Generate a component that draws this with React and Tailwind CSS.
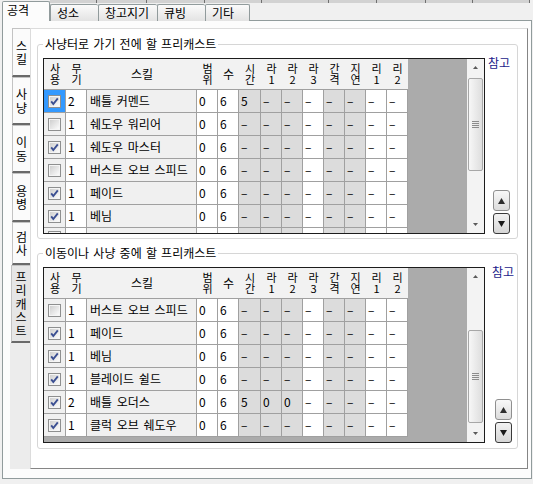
import React from "react";

const COLS = [
  { w: "w-[22px]", h: "사\n용", bg: "bg-[#f0f0f0]" },
  { w: "w-[21px]", h: "무\n기", bg: "bg-white" },
  { w: "w-[110px]", h: "스킬", bg: "bg-[#f0f0f0]", one: true },
  { w: "w-[21px]", h: "범\n위", bg: "bg-white" },
  { w: "w-[21px]", h: "수", bg: "bg-white", one: true },
  { w: "w-[22px]", h: "시\n간", bg: "bg-[#dcdcdc]" },
  { w: "w-[21px]", h: "라\n1", bg: "bg-[#dcdcdc]" },
  { w: "w-[21px]", h: "라\n2", bg: "bg-[#dcdcdc]" },
  { w: "w-[21px]", h: "라\n3", bg: "bg-white" },
  { w: "w-[21px]", h: "간\n격", bg: "bg-[#dcdcdc]" },
  { w: "w-[21px]", h: "지\n연", bg: "bg-[#dcdcdc]" },
  { w: "w-[21px]", h: "리\n1", bg: "bg-white" },
  { w: "w-[21px]", h: "리\n2", bg: "bg-white" },
];

const GRID1 = [
  { chk: true, sel: true, wp: "2", name: "배틀 커멘드", t: "5" },
  { chk: false, wp: "1", name: "쉐도우 워리어" },
  { chk: true, wp: "1", name: "쉐도우 마스터" },
  { chk: false, wp: "1", name: "버스트 오브 스피드" },
  { chk: true, wp: "1", name: "페이드" },
  { chk: true, wp: "1", name: "베님" },
];

const GRID2 = [
  { chk: false, wp: "1", name: "버스트 오브 스피드" },
  { chk: true, wp: "1", name: "페이드" },
  { chk: true, wp: "1", name: "베님" },
  { chk: true, wp: "1", name: "블레이드 쉴드" },
  { chk: true, wp: "2", name: "배틀 오더스", t: "5", r1: "0", r2: "0" },
  { chk: true, wp: "1", name: "클럭 오브 쉐도우" },
];

const D = "–";

function CheckBox({ checked }) {
  return (
    <svg width="13" height="13" viewBox="0 0 13 13">
      <defs>
        <linearGradient id="cbg" x1="0" y1="0" x2="1" y2="1">
          <stop offset="0" stopColor="#cfcfcf" />
          <stop offset="1" stopColor="#fbfbfb" />
        </linearGradient>
      </defs>
      <rect x="0.5" y="0.5" width="12" height="12" fill="#f5f5f5" stroke="#8e8f8f" />
      <rect x="2" y="2" width="9" height="9" fill="url(#cbg)" />
      {checked && (
        <path d="M3.2 6.4 L5.3 9 L9.8 3.4" stroke="#3b4f92" strokeWidth="1.9" fill="none" />
      )}
    </svg>
  );
}

function Header() {
  return (
    <div className="flex h-[31px]">
      {COLS.map((c, i) => (
        <div
          key={i}
          className={`${c.w} h-[31px] bg-[#f2f2f2] border-b border-[#a0a0a0] flex items-center justify-center text-center`}
        >
          <span className={c.one ? "text-[12px] leading-[14px]" : "text-[11px] leading-[11px] whitespace-pre-line"}>{c.h}</span>
        </div>
      ))}
    </div>
  );
}

function Row({ r }) {
  const vals = [null, r.wp, r.name, "0", "6", r.t || D, r.r1 || D, r.r2 || D, D, D, D, D, D];
  return (
    <div className="flex h-[23px]">
      {COLS.map((c, i) => {
        if (i === 0) {
          return (
            <div
              key={i}
              className={`${c.w} h-[23px] ${r.sel ? "bg-[#3399ff]" : c.bg} border-r border-b border-[#a0a0a0] flex items-center justify-center`}
            >
              <CheckBox checked={r.chk} />
            </div>
          );
        }
        return (
          <div
            key={i}
            className={`${c.w} h-[23px] ${c.bg} border-r border-b border-[#a0a0a0] flex items-center ${i === 2 ? "pl-[3px] [word-spacing:2px]" : "pl-[2px]"} text-[12px] leading-[14px] whitespace-nowrap overflow-hidden`}
          >
            {vals[i]}
          </div>
        );
      })}
    </div>
  );
}

function PartialRow() {
  return (
    <div className="flex h-[5px] overflow-hidden">
      {COLS.map((c, i) => (
        <div key={i} className={`${c.w} h-[5px] ${c.bg} border-r border-[#a0a0a0] flex justify-center pt-[3px]`}>
          {i === 0 && <div className="w-[13px] h-[2px] border-t border-x border-[#8e8f8f] bg-[#f5f5f5]" />}
        </div>
      ))}
    </div>
  );
}

function Scrollbar({ spacer }) {
  return (
    <div className="w-[17px] h-[174px] bg-[#f3f3f3] flex flex-col items-center">
      <div className="h-[17px] w-[17px] flex items-center justify-center">
        <svg width="5" height="3" viewBox="0 0 5 3">
          <path d="M0 3 L2.5 0 L5 3 Z" fill="#5a5a5a" />
        </svg>
      </div>
      <div className={spacer} />
      <div className="w-[15px] h-[93px] rounded-[2px] border border-[#a7a7a7] bg-gradient-to-r from-[#f7f7f7] to-[#dedede] flex items-center justify-center">
        <svg width="7" height="7" viewBox="0 0 7 7">
          <path d="M0 0.5 H7 M0 2.5 H7 M0 4.5 H7 M0 6.5 H7" stroke="#8c8c8c" strokeWidth="1" />
        </svg>
      </div>
      <div className="flex-1" />
      <div className="h-[17px] w-[17px] flex items-center justify-center">
        <svg width="5" height="3" viewBox="0 0 5 3">
          <path d="M0 0 L2.5 3 L5 0 Z" fill="#5a5a5a" />
        </svg>
      </div>
    </div>
  );
}

function Grid({ rows, partial, spacer }) {
  return (
    <div className="w-[442px] h-[176px] border border-[#1c1c1c] flex bg-[#ababab]">
      <div className="w-[364px] flex flex-col">
        <Header />
        {rows.map((r, i) => (
          <Row key={i} r={r} />
        ))}
        {partial && <PartialRow />}
      </div>
      <div className="w-[59px]" />
      <Scrollbar spacer={spacer} />
    </div>
  );
}

function SideButtons({ labelCls, btnCls }) {
  return (
    <div className="h-[176px] flex flex-col justify-between">
      <div className={`${labelCls} text-[12px] leading-[14px] text-[#1b1b8a] -mt-[2px]`}>참고</div>
      <div className={`${btnCls} flex flex-col gap-[2px]`}>
        <div className="w-[17px] h-[21px] rounded-[3px] border border-[#8f8f8f] bg-gradient-to-b from-[#f8f8f8] to-[#dcdcdc] flex items-center justify-center">
          <svg width="7" height="6" viewBox="0 0 7 6">
            <path d="M0 6 L3.5 0 L7 6 Z" fill="#2e2e2e" />
          </svg>
        </div>
        <div className="w-[17px] h-[21px] rounded-[3px] border border-[#3a3a3a] bg-gradient-to-b from-[#f2f2f2] to-[#d6d6d6] flex items-center justify-center">
          <svg width="7" height="6" viewBox="0 0 7 6">
            <path d="M0 0 L3.5 6 L7 0 Z" fill="#1a1a1a" />
          </svg>
        </div>
      </div>
    </div>
  );
}

function Group({ title, rows, partial, spacer, labelCls, btnCls, mt, pb }) {
  return (
    <fieldset className={`${mt} ${pb} w-[481px] border border-[#d6d6d6] rounded-[3px] pl-[5px]`}>
      <legend className="px-[2px] text-[12px] leading-[14px] [word-spacing:1.5px]">{title}</legend>
      <div className="mt-[7px] flex">
        <Grid rows={rows} partial={partial} spacer={spacer} />
        <SideButtons labelCls={labelCls} btnCls={btnCls} />
      </div>
    </fieldset>
  );
}

const VTABS = [
  { t: "스\n킬", h: "h-[49px]" },
  { t: "사\n냥", h: "h-[48px]" },
  { t: "이\n동", h: "h-[48px]" },
  { t: "용\n병", h: "h-[49px]" },
  { t: "검\n사", h: "h-[43px]" },
  { t: "프\n리\n캐\n스\n트", h: "h-[78px]", sel: true },
];

const TOPTABS = [
  { t: "성소", w: "w-[48px]" },
  { t: "창고지기", w: "w-[59px]" },
  { t: "큐빙", w: "w-[48px]" },
  { t: "기타", w: "w-[45px]" },
];

const STRIP = ["w-[47px]", "w-[50px]", "w-[58px]", "w-[57px]", "w-[67px]", "w-[48px]", "w-[49px]", "w-[47px]", "w-[57px]"];

export default function App() {
  return (
    <div className="w-[533px] h-[484px] overflow-hidden bg-[#f0f0f0] font-[family-name:'Noto_Sans_CJK_KR','Noto_Sans',sans-serif] text-black">
      <div className="h-[21px] flex">
        <div className="relative z-10 ml-[2px] mt-[1px] w-[48px] h-[20px] border-l border-t border-r border-[#919b9c] bg-[#fcfcfc] pl-[4px] pt-[1px] text-[12px] leading-[14px] rounded-t-[2px]">
          공격
        </div>
        <div className="flex flex-col">
          <div className="h-[3px] flex bg-[#d2d2d2]">
            {STRIP.map((w, i) => (
              <div key={i} className={`${w} h-[3px] border-r border-[#707070]`} />
            ))}
          </div>
          <div className="mt-[1px] flex">
            {TOPTABS.map((t, i) => (
              <div
                key={i}
                className={`${t.w} h-[17px] border-t border-l ${i === TOPTABS.length - 1 ? "border-r" : ""} border-[#919b9c] bg-gradient-to-b from-[#fbfbfb] to-[#e3e3e3] pl-[6px] text-[12px] leading-[16px] rounded-t-[2px]`}
              >
                {t.t}
              </div>
            ))}
          </div>
        </div>
      </div>

      <div className="-mt-[1px] ml-[2px] w-[530px] h-[459px] border border-[#919b9c] bg-[#fcfcfc] flex pt-[7px] pb-[9px]">
        <div className="ml-[7px] w-[20px] flex flex-col">
          {VTABS.map((v, i) => (
            <div
              key={i}
              className={`${v.h} ${v.sel ? "ml-[1px] bg-[#e6e6e6]" : "ml-[2px] bg-[#fbfbfb]"} border-l border-t border-[#c3c3c3] border-b-2 border-b-[#6a6a6a] flex items-center justify-center text-center`}
            >
              <span className="text-[12px] leading-[13.5px] whitespace-pre-line">{v.t}</span>
            </div>
          ))}
          <div className="flex-1 bg-[#ececec]" />
        </div>

        <div className="w-[498px] border-l border-t border-[#dcdcdc] border-r border-b border-r-[#858585] border-b-[#858585] bg-white pl-[6px]">
          <Group
            title="사냥터로 가기 전에 할 프리캐스트"
            rows={GRID1}
            partial
            spacer="h-[2px]"
            labelCls="ml-[3px]"
            btnCls="ml-[8px]"
            mt="mt-[8px]"
            pb="pb-[4px]"
          />
          <Group
            title="이동이나 사냥 중에 할 프리캐스트"
            rows={GRID2}
            partial={false}
            spacer="h-[45px]"
            labelCls="ml-[7px]"
            btnCls="ml-[10px]"
            mt="mt-[7px]"
            pb="pb-[5px]"
          />
        </div>
      </div>
    </div>
  );
}
